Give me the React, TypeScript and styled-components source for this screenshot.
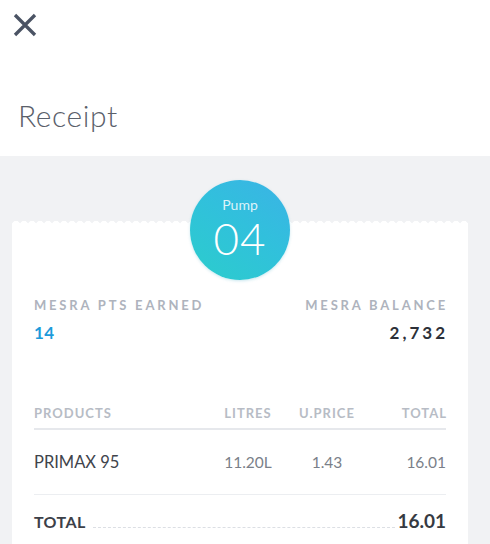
import React from 'react';
import styled, { createGlobalStyle } from 'styled-components';

const GlobalStyle = createGlobalStyle`
  html, body {
    margin: 0;
    padding: 0;
    background: #f1f2f4;
  }
  body {
    font-family: 'Lato', 'Noto Sans', sans-serif;
    -webkit-font-smoothing: antialiased;
  }
`;

const Page = styled.div`
  width: 490px;
  height: 544px;
  overflow: hidden;
  display: flex;
  flex-direction: column;
`;

const Header = styled.header`
  flex-shrink: 0;
  background: #fff;
  height: 156px;
  box-sizing: border-box;
  padding: 12px 0 0 12px;
  display: flex;
  flex-direction: column;
`;

const CloseButton = styled.button`
  width: 26px;
  height: 26px;
  padding: 0;
  border: 0;
  background: none;
  display: flex;
  align-items: center;
  justify-content: center;
  cursor: pointer;
`;

const Title = styled.h1`
  margin: 60px 0 0 6px;
  font-size: 30px;
  font-weight: 300;
  letter-spacing: 0.6px;
  color: #5a606a;
  line-height: 34px;
`;

const Body = styled.main`
  flex: 1;
  background: #f1f2f4;
  padding: 69px 22px 0 12px;
`;

const Card = styled.section`
  position: relative;
  background: #fff;
  padding: 0 22px 20px;
  display: flex;
  flex-direction: column;

  &::before {
    content: '';
    position: absolute;
    left: 0;
    right: 0;
    top: -4px;
    height: 4px;
    background: radial-gradient(circle at 50% 100%, #fff 3.8px, transparent 4.4px) 0 0 / 8px 4px repeat-x;
  }
`;

const PumpBadge = styled.div`
  position: relative;
  width: 100px;
  height: 100px;
  margin: -45px auto 0;
  border-radius: 50%;
  background: linear-gradient(215deg, #3bb3e6 0%, #31c0dc 45%, #2bcdcc 100%);
  box-shadow: 0 1px 3px rgba(40, 160, 190, 0.25);
  color: #fff;
  display: flex;
  flex-direction: column;
  align-items: center;
  padding-top: 16px;
  box-sizing: border-box;
`;

const PumpLabel = styled.span`
  font-size: 14px;
  line-height: 18px;
  color: rgba(255, 255, 255, 0.85);
`;

const PumpNumber = styled.span`
  margin-top: 2px;
  font-size: 44px;
  font-weight: 300;
  line-height: 44px;
  letter-spacing: 1px;
`;

const Metrics = styled.div`
  display: flex;
  justify-content: space-between;
  margin-top: 17px;
`;

const Metric = styled.div<{ $align?: 'left' | 'right' }>`
  display: flex;
  flex-direction: column;
  gap: 10px;
  align-items: ${p => (p.$align === 'right' ? 'flex-end' : 'flex-start')};
`;

const MetricLabel = styled.span`
  font-size: 13px;
  font-weight: 700;
  letter-spacing: 2.8px;
  margin-right: -2px;
  color: #aeb3bd;
  line-height: 16px;
`;

const MetricValue = styled.span<{ $accent?: boolean }>`
  font-size: 17px;
  font-weight: 700;
  line-height: 20px;
  letter-spacing: ${p => (p.$accent ? '0.5px' : '3px')};
  margin-right: ${p => (p.$accent ? '0' : '-2px')};
  color: ${p => (p.$accent ? '#1c9bdb' : '#2c3038')};
`;

const Table = styled.div`
  margin-top: 55px;
  display: flex;
  flex-direction: column;
`;

const Row = styled.div<{ $head?: boolean }>`
  display: grid;
  grid-template-columns: 1fr 80px 78px 80px;
  align-items: center;
  height: ${p => (p.$head ? '32px' : '65px')};
  border-bottom: ${p => (p.$head ? '2px solid #e6e8ec' : '1px solid #eceef1')};
  box-sizing: border-box;
`;

const Cell = styled.span<{ $head?: boolean; $align?: 'left' | 'center' | 'right' }>`
  text-align: ${p => p.$align || 'left'};
  font-size: ${p => (p.$head ? '13px' : '15.5px')};
  font-weight: ${p => (p.$head ? 700 : 400)};
  color: ${p => (p.$head ? '#b7bcc5' : '#7a7f89')};
  letter-spacing: ${p => (p.$head ? '1px' : '0')};
  margin-right: ${p => (p.$head && p.$align === 'right' ? '-1px' : '0')};
`;

const ProductName = styled(Cell)`
  font-size: 16.5px;
  color: #3f444c;
`;

const TotalRow = styled.div`
  display: flex;
  align-items: baseline;
  height: 50px;
  padding-top: 14px;
  box-sizing: border-box;
`;

const TotalLabel = styled.span`
  font-size: 16px;
  font-weight: 700;
  letter-spacing: 0.4px;
  color: #3c4048;
`;

const Dots = styled.span`
  flex: 1;
  margin: 0 2px 0 7px;
  border-bottom: 1px dashed #dcdfe4;
`;

const TotalValue = styled.span`
  font-size: 19px;
  font-weight: 700;
  color: #363a42;
`;

const CloseIcon = () => (
  <svg width="24" height="24" viewBox="0 0 24 24" fill="none">
    <path d="M2 2L22 22M22 2L2 22" stroke="#4b5364" strokeWidth="3.3" strokeLinecap="butt" />
  </svg>
);

const App: React.FC = () => {
  return (
    <Page>
      <GlobalStyle />
      <Header>
        <CloseButton aria-label="Close">
          <CloseIcon />
        </CloseButton>
        <Title>Receipt</Title>
      </Header>
      <Body>
        <Card>
          <PumpBadge>
            <PumpLabel>Pump</PumpLabel>
            <PumpNumber>04</PumpNumber>
          </PumpBadge>
          <Metrics>
            <Metric>
              <MetricLabel>MESRA PTS EARNED</MetricLabel>
              <MetricValue $accent>14</MetricValue>
            </Metric>
            <Metric $align="right">
              <MetricLabel>MESRA BALANCE</MetricLabel>
              <MetricValue>2,732</MetricValue>
            </Metric>
          </Metrics>
          <Table>
            <Row $head>
              <Cell $head>PRODUCTS</Cell>
              <Cell $head $align="center">LITRES</Cell>
              <Cell $head $align="center">U.PRICE</Cell>
              <Cell $head $align="right">TOTAL</Cell>
            </Row>
            <Row>
              <ProductName>PRIMAX 95</ProductName>
              <Cell $align="center">11.20L</Cell>
              <Cell $align="center">1.43</Cell>
              <Cell $align="right">16.01</Cell>
            </Row>
            <TotalRow>
              <TotalLabel>TOTAL</TotalLabel>
              <Dots />
              <TotalValue>16.01</TotalValue>
            </TotalRow>
          </Table>
        </Card>
      </Body>
    </Page>
  );
};

export default App;
